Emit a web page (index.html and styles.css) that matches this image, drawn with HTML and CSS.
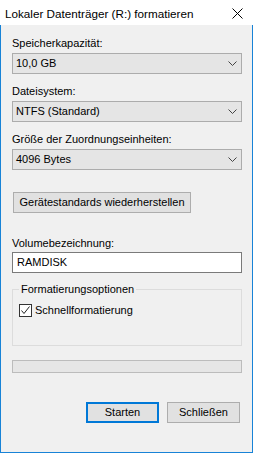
FILE: index.html
```html
<!DOCTYPE html>
<html lang="de">
<head>
<meta charset="utf-8">
<title>Formatieren</title>
<link rel="stylesheet" href="styles.css">
</head>
<body>
<div class="window">
  <div class="titlebar">
    <span class="title">Lokaler Datenträger (R:) formatieren</span>
    <svg class="close" width="11" height="11" viewBox="0 0 11 11"><path d="M0.5 0.5L10.5 10.5M10.5 0.5L0.5 10.5" stroke="#000" stroke-width="1" fill="none"/></svg>
  </div>
  <div class="content">
    <div class="label first">Speicherkapazität:</div>
    <div class="combo"><span>10,0 GB</span><svg class="chev" width="9" height="5" viewBox="0 0 9 5"><path d="M0.5 0.5L4.5 4.5L8.5 0.5" stroke="#444" stroke-width="1" fill="none"/></svg></div>

    <div class="label">Dateisystem:</div>
    <div class="combo"><span>NTFS (Standard)</span><svg class="chev" width="9" height="5" viewBox="0 0 9 5"><path d="M0.5 0.5L4.5 4.5L8.5 0.5" stroke="#444" stroke-width="1" fill="none"/></svg></div>

    <div class="label">Größe der Zuordnungseinheiten:</div>
    <div class="combo"><span>4096 Bytes</span><svg class="chev" width="9" height="5" viewBox="0 0 9 5"><path d="M0.5 0.5L4.5 4.5L8.5 0.5" stroke="#444" stroke-width="1" fill="none"/></svg></div>

    <button class="btn restore">Gerätestandards wiederherstellen</button>

    <div class="label vol">Volumebezeichnung:</div>
    <div class="textbox">RAMDISK</div>

    <fieldset class="group">
      <legend class="legend">Formatierungsoptionen</legend>
      <div class="checkrow">
        <span class="checkbox"><svg width="11" height="11" viewBox="0 0 11 11"><path d="M1.5 5.5L4 8.5L9.5 1.5" stroke="#222" stroke-width="1" fill="none"/></svg></span>
        <span class="checklabel">Schnellformatierung</span>
      </div>
    </fieldset>

    <div class="progress"></div>

    <div class="actions">
      <button class="btn action default">Starten</button>
      <button class="btn action">Schließen</button>
    </div>
  </div>
</div>
</body>
</html>
```

FILE: styles.css
```css
html, body {
  margin: 0;
  padding: 0;
}

body {
  width: 253px;
  height: 453px;
  background: #f0f0f0;
  font-family: "Liberation Sans", Arial, sans-serif;
  font-size: 11px;
  color: #000;
}

.window {
  width: 253px;
  height: 453px;
  display: flex;
  flex-direction: column;
  box-sizing: border-box;
}

.titlebar {
  height: 25px;
  background: #fff;
  display: flex;
  justify-content: space-between;
  align-items: flex-start;
  flex: none;
}

.title {
  font-size: 11.7px;
  line-height: 14px;
  padding: 7px 0 0 5px;
  white-space: nowrap;
}

.close {
  margin: 8px 10px 0 0;
  display: block;
}

.content {
  flex: 1;
  display: flex;
  flex-direction: column;
  border: 1px solid #1883d7;
  border-top: none;
  padding: 12px 10px 0 11px;
  background: #f0f0f0;
}

.label {
  height: 13px;
  line-height: 13px;
  margin-top: 11px;
  white-space: nowrap;
}

.label.first {
  margin-top: 0;
}

.label.vol {
  margin-top: 24px;
}

.combo {
  margin-top: 3px;
  height: 21px;
  box-sizing: border-box;
  border: 1px solid #acacac;
  background: #e5e5e5;
  display: flex;
  align-items: center;
  justify-content: space-between;
  padding: 0 4px 0 3px;
  line-height: 13px;
}

.chev {
  display: block;
}

.btn {
  font-family: "Liberation Sans", Arial, sans-serif;
  font-size: 11px;
  color: #000;
  background: #e1e1e1;
  border: 1px solid #adadad;
  box-sizing: border-box;
  height: 21px;
  padding: 0;
  line-height: 13px;
  text-align: center;
}

.restore {
  align-self: flex-start;
  margin: 22px 0 0 1px;
  width: 178px;
}

.textbox {
  margin-top: 2px;
  height: 21px;
  box-sizing: border-box;
  border: 1px solid #7a7a7a;
  background: #fff;
  padding: 0 0 0 4px;
  display: flex;
  align-items: center;
  line-height: 13px;
}

.group {
  margin: 9px 0 0 0;
  border: 1px solid #dcdcdc;
  padding: 0 0 28px 6px;
  min-width: 0;
}

.legend {
  padding: 0 2px;
  line-height: 14px;
  height: 14px;
}

.checkrow {
  margin-top: 8px;
  display: flex;
  align-items: center;
  height: 13px;
}

.checkbox {
  width: 13px;
  height: 13px;
  box-sizing: border-box;
  border: 1px solid #333;
  background: #fff;
  display: flex;
  align-items: center;
  justify-content: center;
  flex: none;
}

.checkbox svg {
  display: block;
}

.checklabel {
  margin-left: 3px;
  line-height: 13px;
}

.progress {
  margin-top: 14px;
  height: 13px;
  box-sizing: border-box;
  border: 1px solid #bcbcbc;
  background: #e6e6e6;
}

.actions {
  margin-top: 29px;
  display: flex;
  justify-content: flex-end;
  gap: 8px;
  padding-right: 2px;
}

.action {
  width: 73px;
}

.action.default {
  border: 2px solid #0078d7;
}
```
